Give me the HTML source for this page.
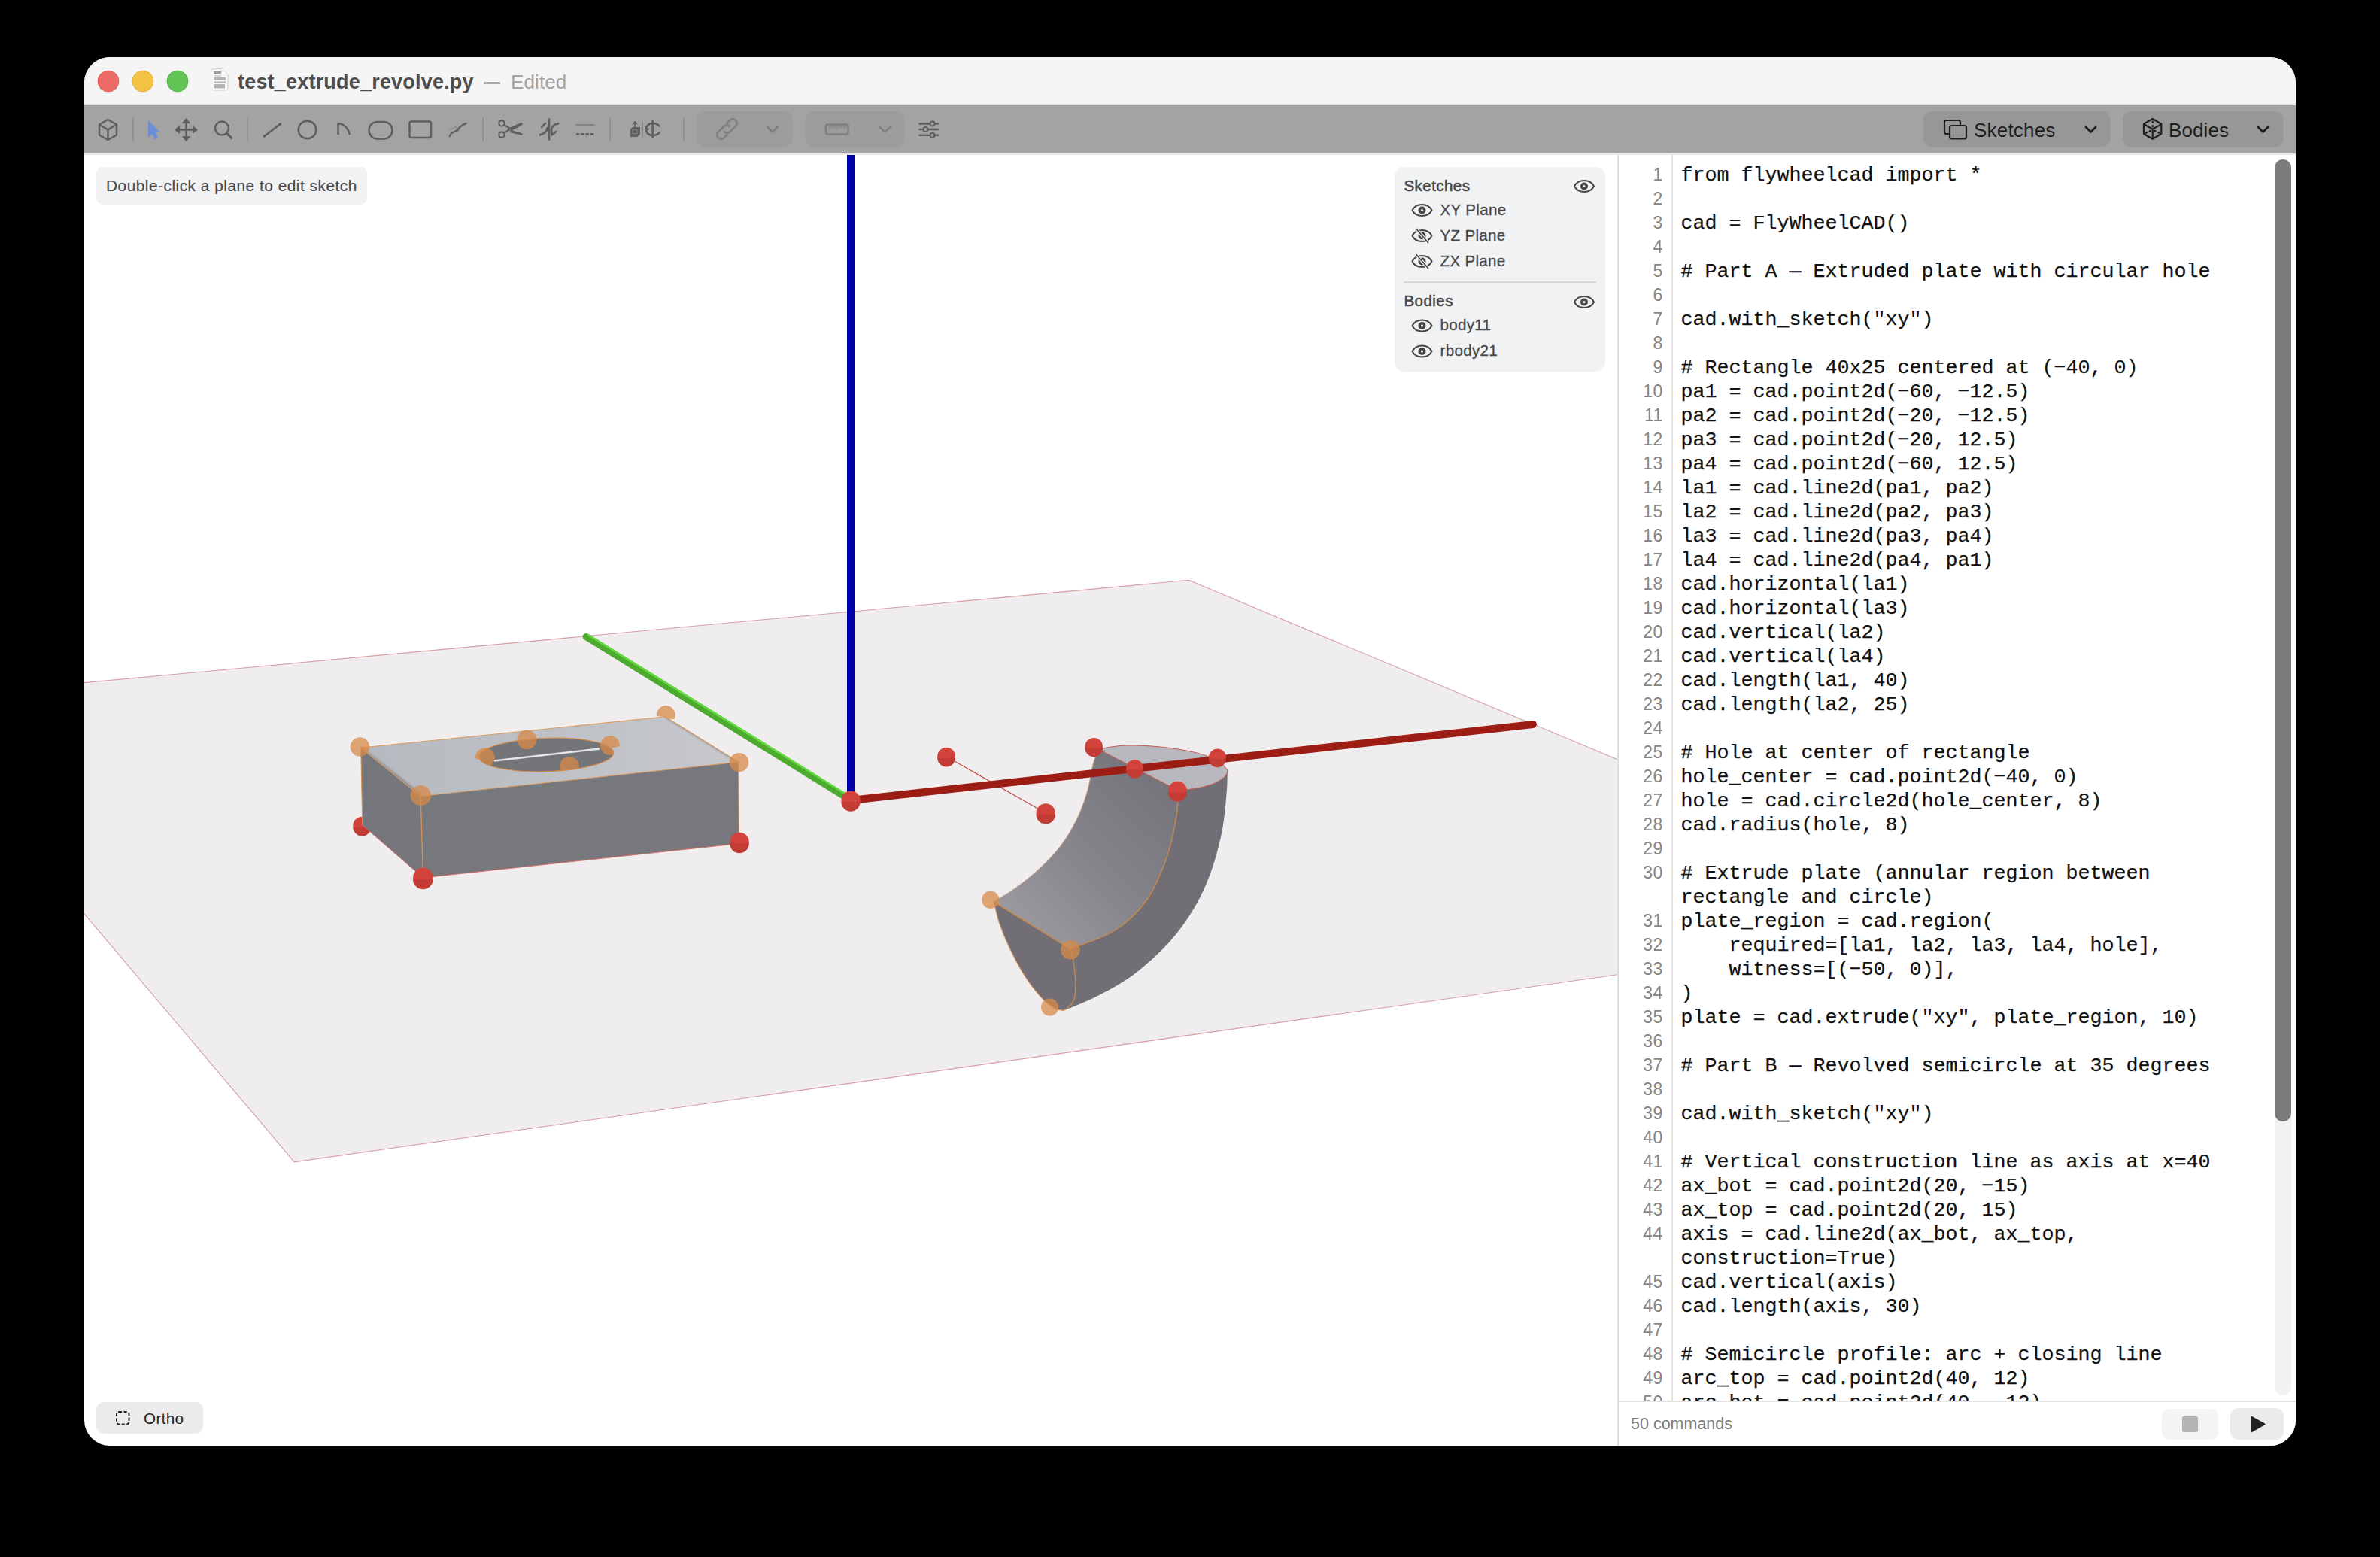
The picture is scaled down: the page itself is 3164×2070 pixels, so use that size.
<!DOCTYPE html><html><head><meta charset="utf-8"><style>
*{margin:0;padding:0;box-sizing:border-box}
html,body{width:3164px;height:2070px;background:#000;overflow:hidden}
.win{position:absolute;left:112px;top:76px;width:2940px;height:1846px;border-radius:34px;overflow:hidden;background:#fff}
.in{position:absolute;left:-112px;top:-76px;width:3164px;height:2070px}
.t{position:absolute;white-space:pre}
.r{position:absolute}
svg{position:absolute;left:0;top:0}
</style></head><body><div class="win"><div class="in"><div class="r" style="left:0;top:0;width:3164px;height:138px;background:#f5f5f5"></div><div class="r" style="left:0;top:138px;width:3164px;height:2px;background:#e6e6e6"></div><div class="r" style="left:0;top:140px;width:3164px;height:64px;background:#a3a3a3"></div><div class="r" style="left:0;top:204px;width:3164px;height:2px;background:#e8e8e8"></div><svg width="3164" height="2070" viewBox="0 0 3164 2070"><defs><linearGradient id="topg" x1="0" y1="0" x2="1" y2="0"><stop offset="0" stop-color="#b6b9bf"/><stop offset="1" stop-color="#c6c8cc"/></linearGradient><linearGradient id="inng" x1="1319" y1="1240" x2="1560" y2="1000" gradientUnits="userSpaceOnUse"><stop offset="0" stop-color="#a09fa5"/><stop offset="0.45" stop-color="#86858b"/><stop offset="1" stop-color="#727077"/></linearGradient><linearGradient id="gax" x1="0" y1="0" x2="0" y2="1"><stop offset="0" stop-color="#62dc3e"/><stop offset="1" stop-color="#48a22c"/></linearGradient><linearGradient id="bev1" x1="520" y1="1026" x2="523.5" y2="1021.5" gradientUnits="userSpaceOnUse"><stop offset="0" stop-color="#8c8f95"/><stop offset="1" stop-color="#b7bac0" stop-opacity="0"/></linearGradient><linearGradient id="bev2" x1="933" y1="983" x2="930.5" y2="987" gradientUnits="userSpaceOnUse"><stop offset="0" stop-color="#979aa0"/><stop offset="1" stop-color="#c2c4c8" stop-opacity="0"/></linearGradient><clipPath id="vp"><rect x="112" y="206" width="2038" height="1716"/></clipPath></defs><g clip-path="url(#vp)"><polygon points="-129,930 1580.4,771.3 2661,1223.4 391.2,1544.8" fill="#efedee" stroke="#d69ea2" stroke-width="1.1"/><circle cx="481.3" cy="1097.8" r="12" fill="#d2443b"/><path d="M469.3,1099.6 A12,12 0 0 0 493.3,1099.6 Z" fill="#c23c35"/><polygon points="479.7,994.2 559.2,1058.5 562.4,1166.9 481.8,1097" fill="#75777c"/><polygon points="559.2,1058.5 981.7,1013.1 982.5,1121.5 562.4,1166.9" fill="#76787d"/><polygon points="479.7,994.2 884.5,952.9 981.7,1013.1 559.2,1058.5" fill="url(#topg)"/><polygon points="479.7,994.2 559.2,1058.5 562.3,1054.6 482.8,990.3" fill="url(#bev1)"/><polygon points="884.5,952.9 981.7,1013.1 979.6,1016.5 882.4,956.3" fill="url(#bev2)"/><ellipse cx="726.4" cy="1003.5" rx="89.4" ry="22.2" transform="rotate(-1.9 726.4 1003.5)" fill="#737579" stroke="#d38b45" stroke-width="1.2"/><line x1="657" y1="1011.5" x2="797" y2="995.5" stroke="#e3e5e8" stroke-width="2.5"/><polyline points="479.7,994.2 884.5,952.9 981.7,1013.1 559.2,1058.5 479.7,994.2" fill="none" stroke="#dc9a5c" stroke-width="1.1"/><line x1="559.2" y1="1058.5" x2="562.4" y2="1166.9" stroke="#d9924c" stroke-width="1.3"/><line x1="479.7" y1="994.2" x2="481.8" y2="1097" stroke="#d9924c" stroke-width="1"/><line x1="981.7" y1="1013.1" x2="982.5" y2="1121.5" stroke="#e0a070" stroke-width="1"/><polyline points="481.8,1097 562.4,1166.9 982.5,1121.5" fill="none" stroke="#d86a60" stroke-width="1"/><circle cx="478.5" cy="993" r="12.8" fill="#d88a48" fill-opacity="0.75"/><circle cx="559.3" cy="1057.5" r="13.6" fill="#d88a48" fill-opacity="0.75"/><circle cx="982.5" cy="1013.6" r="12.7" fill="#d88a48" fill-opacity="0.75"/><clipPath id="trb"><path d="M872,952 L872,930 L900,930 L900,956 L892,956 L884.5,952.9 Z"/></clipPath><g clip-path="url(#trb)"><circle cx="885.3" cy="950.5" r="12.4" fill="#d88a48" fill-opacity="0.75"/></g><clipPath id="hs0"><path d="M687.3,983.2 A13,13 0 0 1 713.3,983.2 A13,3.25 0 0 1 687.3,983.2 Z"/><ellipse cx="726.4" cy="1003.5" rx="89.4" ry="22.2" transform="rotate(-1.9 726.4 1003.5)"/></clipPath><g clip-path="url(#hs0)"><circle cx="700.3" cy="983.2" r="13" fill="#d88a48" fill-opacity="0.75"/></g><clipPath id="hs1"><path d="M631.8,1007.3 A13,13 0 0 1 657.8,1007.3 A13,3.25 0 0 1 631.8,1007.3 Z"/><ellipse cx="726.4" cy="1003.5" rx="89.4" ry="22.2" transform="rotate(-1.9 726.4 1003.5)"/></clipPath><g clip-path="url(#hs1)"><circle cx="644.8" cy="1007.3" r="13" fill="#d88a48" fill-opacity="0.75"/></g><clipPath id="hs2"><path d="M798,991 A13,13 0 0 1 824,991 A13,3.25 0 0 1 798,991 Z"/><ellipse cx="726.4" cy="1003.5" rx="89.4" ry="22.2" transform="rotate(-1.9 726.4 1003.5)"/></clipPath><g clip-path="url(#hs2)"><circle cx="811" cy="991" r="13" fill="#d88a48" fill-opacity="0.75"/></g><clipPath id="hs3"><path d="M743.9,1019 A13,13 0 0 1 769.9,1019 A13,3.25 0 0 1 743.9,1019 Z"/><ellipse cx="726.4" cy="1003.5" rx="89.4" ry="22.2" transform="rotate(-1.9 726.4 1003.5)"/></clipPath><g clip-path="url(#hs3)"><circle cx="756.9" cy="1019" r="13" fill="#d88a48" fill-opacity="0.75"/></g><circle cx="562.4" cy="1166.9" r="13.3" fill="#d2443b"/><path d="M549.1,1168.895 A13.3,13.3 0 0 0 575.6999999999999,1168.895 Z" fill="#c23c35"/><circle cx="983" cy="1119.6" r="12.8" fill="#d2443b"/><path d="M970.2,1121.52 A12.8,12.8 0 0 0 995.8,1121.52 Z" fill="#c23c35"/><path d="M1459.8,995.9 C1466.1,995.1 1483.2,991.4 1497.7,991.0 C1512.2,990.6 1531.0,991.8 1546.5,993.4 C1562.0,995.0 1578.2,997.8 1590.4,1000.8 C1602.6,1003.8 1612.8,1007.9 1619.7,1011.7 C1626.6,1015.6 1629.9,1021.9 1631.9,1023.9 C1631.8,1026.6 1631.7,1035.1 1631.5,1040.0 C1631.3,1044.9 1631.5,1044.9 1630.7,1053.2 C1630.0,1061.5 1628.8,1077.7 1627.0,1089.9 C1625.2,1102.1 1623.0,1113.9 1619.7,1126.5 C1616.5,1139.1 1612.4,1152.9 1607.5,1165.5 C1602.6,1178.1 1597.3,1190.0 1590.4,1202.2 C1583.5,1214.4 1575.0,1227.4 1566.0,1238.8 C1557.0,1250.2 1548.1,1259.9 1536.7,1270.5 C1525.3,1281.1 1511.5,1292.9 1497.7,1302.3 C1483.9,1311.7 1467.6,1319.9 1453.7,1326.7 C1439.8,1333.5 1421.0,1340.5 1414.5,1343.3 C1412.6,1342.9 1407.9,1343.7 1403.0,1341.0 C1398.1,1338.3 1391.8,1334.3 1385.0,1327.0 C1378.2,1319.7 1369.2,1308.2 1362.0,1297.0 C1354.8,1285.8 1347.5,1271.4 1342.0,1260.0 C1336.5,1248.6 1332.5,1238.8 1329.0,1228.6 C1325.5,1218.4 1322.4,1203.7 1321.1,1198.7 C1325.9,1195.7 1340.0,1187.7 1350.0,1180.5 C1360.0,1173.3 1371.0,1164.8 1381.0,1155.5 C1391.0,1146.2 1401.5,1135.8 1410.0,1124.5 C1418.5,1113.2 1426.0,1100.4 1432.0,1088.0 C1438.0,1075.6 1442.6,1061.7 1446.0,1050.0 C1449.4,1038.3 1450.2,1027.0 1452.5,1018.0 C1454.8,1009.0 1458.6,999.6 1459.8,995.9 Z" fill="#716f75"/><path d="M1321.1,1198.7 C1325.9,1195.7 1340.0,1187.7 1350.0,1180.5 C1360.0,1173.3 1371.0,1164.8 1381.0,1155.5 C1391.0,1146.2 1401.5,1135.8 1410.0,1124.5 C1418.5,1113.2 1426.0,1100.4 1432.0,1088.0 C1438.0,1075.6 1442.6,1061.7 1446.0,1050.0 C1449.4,1038.3 1450.2,1027.0 1452.5,1018.0 C1454.8,1009.0 1458.6,999.6 1459.8,995.9 L1566,1050.8 C1565.7,1056.5 1566.5,1070.1 1564.0,1085.0 C1561.5,1099.9 1557.7,1121.3 1551.0,1140.0 C1544.3,1158.7 1535.5,1180.8 1524.0,1197.0 C1512.5,1213.2 1498.8,1226.2 1482.0,1237.0 C1465.2,1247.8 1432.8,1257.4 1423.0,1261.5 Z" fill="url(#inng)"/><path d="M1459.8,995.9 C1466.1,995.1 1483.2,991.4 1497.7,991.0 C1512.2,990.6 1531.0,991.8 1546.5,993.4 C1562.0,995.0 1578.2,997.8 1590.4,1000.8 C1602.6,1003.8 1612.8,1007.9 1619.7,1011.7 C1626.6,1015.6 1629.9,1021.9 1631.9,1023.9 C1631.5,1025.1 1632.0,1028.4 1629.6,1031.1 C1627.2,1033.8 1622.2,1037.5 1617.6,1039.9 C1612.9,1042.3 1607.0,1044.0 1601.7,1045.5 C1596.4,1047.0 1591.7,1047.8 1585.7,1048.7 C1579.8,1049.6 1569.3,1050.5 1566.0,1050.8 Z" fill="#b8b7bd" stroke="#cc5a52" stroke-width="1"/><path d="M1566.0,1050.8 C1565.7,1056.5 1566.5,1070.1 1564.0,1085.0 C1561.5,1099.9 1557.7,1121.3 1551.0,1140.0 C1544.3,1158.7 1535.5,1180.8 1524.0,1197.0 C1512.5,1213.2 1498.8,1226.2 1482.0,1237.0 C1465.2,1247.8 1432.8,1257.4 1423.0,1261.5 " fill="none" stroke="#c98a4c" stroke-width="1.4"/><line x1="1321.1" y1="1198.7" x2="1423" y2="1261.5" stroke="#c98a4c" stroke-width="1.6"/><path d="M1423.0,1261.5 C1423.6,1264.0 1425.6,1269.1 1426.7,1276.2 C1427.8,1283.3 1429.5,1295.5 1429.7,1304.2 C1429.9,1313.0 1429.8,1322.6 1427.9,1328.7 C1426.0,1334.8 1420.8,1338.5 1418.1,1340.9 C1415.4,1343.3 1413.0,1342.9 1412.0,1343.3 " fill="none" stroke="#c98a4c" stroke-width="1.3"/><path d="M1414.5,1343.3 C1412.6,1342.9 1407.9,1343.7 1403.0,1341.0 C1398.1,1338.3 1391.8,1334.3 1385.0,1327.0 C1378.2,1319.7 1369.2,1308.2 1362.0,1297.0 C1354.8,1285.8 1347.5,1271.4 1342.0,1260.0 C1336.5,1248.6 1332.5,1238.8 1329.0,1228.6 C1325.5,1218.4 1322.4,1203.7 1321.1,1198.7 " fill="none" stroke="#d9955a" stroke-width="1.1"/><path d="M1321.1,1198.7 C1325.9,1195.7 1340.0,1187.7 1350.0,1180.5 C1360.0,1173.3 1371.0,1164.8 1381.0,1155.5 C1391.0,1146.2 1401.5,1135.8 1410.0,1124.5 C1418.5,1113.2 1426.0,1100.4 1432.0,1088.0 C1438.0,1075.6 1442.6,1061.7 1446.0,1050.0 C1449.4,1038.3 1450.2,1027.0 1452.5,1018.0 C1454.8,1009.0 1458.6,999.6 1459.8,995.9 " fill="none" stroke="#e0b090" stroke-width="0.9"/><circle cx="1316.8" cy="1196.2" r="11.6" fill="#d88a48" fill-opacity="0.75"/><circle cx="1423" cy="1262.7" r="12.8" fill="#d88a48" fill-opacity="0.75"/><circle cx="1395.6" cy="1339" r="11.6" fill="#d88a48" fill-opacity="0.75"/><line x1="1258.1" y1="1005.8" x2="1390.2" y2="1080.9" stroke="#c4463e" stroke-width="1.2"/><line x1="1131" y1="150" x2="1131" y2="1064" stroke="#0000a8" stroke-width="10"/><line x1="779" y1="846.4" x2="1131" y2="1064" stroke="#4caa2e" stroke-width="9" stroke-linecap="round"/><line x1="781.2" y1="843.6" x2="1125" y2="1056" stroke="#62da3e" stroke-width="2.6"/><line x1="1131" y1="1064" x2="2038" y2="963" stroke="#9c1d14" stroke-width="10" stroke-linecap="round"/><circle cx="1131" cy="1064.2" r="12.6" fill="#d2443b"/><path d="M1118.4,1066.0900000000001 A12.6,12.6 0 0 0 1143.6,1066.0900000000001 Z" fill="#c23c35"/><circle cx="1258.1" cy="1005.8" r="12" fill="#d2443b"/><path d="M1246.1,1007.5999999999999 A12,12 0 0 0 1270.1,1007.5999999999999 Z" fill="#c23c35"/><circle cx="1390.2" cy="1080.9" r="12.7" fill="#d2443b"/><path d="M1377.5,1082.805 A12.7,12.7 0 0 0 1402.9,1082.805 Z" fill="#c23c35"/><circle cx="1454.2" cy="992.7" r="11.8" fill="#d2443b"/><path d="M1442.4,994.47 A11.8,11.8 0 0 0 1466.0,994.47 Z" fill="#c23c35"/><circle cx="1508.6" cy="1021.5" r="11.5" fill="#d2443b"/><path d="M1497.1,1023.225 A11.5,11.5 0 0 0 1520.1,1023.225 Z" fill="#c23c35"/><circle cx="1618.5" cy="1006.9" r="11.5" fill="#d2443b"/><path d="M1607.0,1008.625 A11.5,11.5 0 0 0 1630.0,1008.625 Z" fill="#c23c35"/><circle cx="1565.5" cy="1051.3" r="12.5" fill="#d2443b"/><path d="M1553.0,1053.175 A12.5,12.5 0 0 0 1578.0,1053.175 Z" fill="#c23c35"/></g></svg><svg width="3164" height="206" viewBox="0 0 3164 206"><circle cx="144" cy="108" r="14" fill="#ed6b67" stroke="#d9574f" stroke-width="0.8"/><circle cx="190" cy="108" r="14" fill="#f4c344" stroke="#dca92f" stroke-width="0.8"/><circle cx="236" cy="108" r="14" fill="#61c454" stroke="#4ead41" stroke-width="0.8"/><path d="M283,91.7 L295,91.7 L303,99.7 L303,117.5 Q303,120 300.5,120 L283,120 Q280.5,120 280.5,117.5 L280.5,94.2 Q280.5,91.7 283,91.7 Z" fill="#f7f7f7" stroke="#cfcfcf" stroke-width="1"/><path d="M295,92 L295,99.7 L302.7,99.7 Z" fill="#ffffff" stroke="#dddddd" stroke-width="0.6"/><rect x="284" y="95" width="10" height="3.5" fill="#9c9c9c"/><rect x="284" y="100.5" width="10" height="1" fill="#b4b4b4"/><rect x="284" y="103" width="16" height="3.5" fill="#b4b4b4"/><rect x="284" y="108.5" width="16" height="2" fill="#b4b4b4"/><rect x="284" y="112" width="15" height="5.5" fill="#b4b4b4"/></svg><div class="t" style="left:316px;top:95.54px;font-size:27px;line-height:27px;color:#4d4d4d;font-weight:bold;letter-spacing:0.2px;font-family:'Liberation Sans',sans-serif;">test_extrude_revolve.py</div><div class="r" style="left:643px;top:109px;width:22px;height:3px;background:#ababab"></div><div class="t" style="left:679px;top:96.39px;font-size:26px;line-height:26px;color:#a3a3a3;font-weight:normal;letter-spacing:0.1px;font-family:'Liberation Sans',sans-serif;">Edited</div><svg width="3164" height="206" viewBox="0 0 3164 206" fill="none" stroke-linecap="round" stroke-linejoin="round"><rect x="926" y="148" width="128" height="47.5" rx="11" fill="#9c9c9c" stroke="none"/><rect x="1071" y="148" width="131.5" height="47.5" rx="11" fill="#9c9c9c" stroke="none"/><rect x="2557" y="148" width="248.5" height="47.5" rx="11" fill="#979797" stroke="none"/><rect x="2822" y="148" width="213.5" height="47.5" rx="11" fill="#979797" stroke="none"/><line x1="177" y1="156.5" x2="177" y2="187.5" stroke="#8d8d8d" stroke-width="1.6" stroke-linecap="butt"/><line x1="329" y1="156.5" x2="329" y2="187.5" stroke="#8d8d8d" stroke-width="1.6" stroke-linecap="butt"/><line x1="642" y1="156.5" x2="642" y2="187.5" stroke="#8d8d8d" stroke-width="1.6" stroke-linecap="butt"/><line x1="811" y1="156.5" x2="811" y2="187.5" stroke="#8d8d8d" stroke-width="1.6" stroke-linecap="butt"/><line x1="909" y1="156.5" x2="909" y2="187.5" stroke="#8d8d8d" stroke-width="1.6" stroke-linecap="butt"/><path d="M143.5,159 L155,165.5 L155,179.5 L143.5,186 L132,179.5 L132,165.5 Z M132,165.5 L143.5,172.5 L155,165.5 M143.5,172.5 L143.5,186" stroke="#5e5e5e" stroke-width="2.5"/><path d="M197.5,161 L197.5,182 L202.3,177.2 L206.3,185 L209.6,183.4 L205.8,175.8 L211.5,175.4 Z" fill="#6b8fdb" stroke="#6b8fdb" stroke-width="1.2"/><path d="M247.5,161 L247.5,184 M236,172.5 L259,172.5" stroke="#5e5e5e" stroke-width="2.5"/><path d="M247.5,158 L243,163.5 L252,163.5 Z M247.5,187 L243,181.5 L252,181.5 Z M233,172.5 L238.5,168 L238.5,177 Z M262,172.5 L256.5,168 L256.5,177 Z" fill="#5e5e5e" stroke="#5e5e5e" stroke-width="1.2"/><circle cx="295" cy="170.5" r="9" stroke="#5e5e5e" stroke-width="2.5"/><line x1="301.5" y1="177" x2="307.5" y2="183.5" stroke="#5e5e5e" stroke-width="3.2"/><line x1="351.5" y1="181" x2="372.5" y2="165" stroke="#5e5e5e" stroke-width="2.5"/><circle cx="351.5" cy="181" r="1.8" fill="#5e5e5e" stroke="none"/><circle cx="372.5" cy="165" r="1.8" fill="#5e5e5e" stroke="none"/><circle cx="408.5" cy="172.5" r="11.8" stroke="#5e5e5e" stroke-width="2.5"/><path d="M449.5,178 L449.5,164.5 C456,164 463,170 464.5,178" stroke="#5e5e5e" stroke-width="2.5"/><rect x="490.5" y="162" width="31" height="22.5" rx="11" stroke="#5e5e5e" stroke-width="2.5"/><rect x="544.5" y="161.5" width="28.5" height="21.5" rx="2.5" stroke="#5e5e5e" stroke-width="2.5"/><path d="M598,181 C600,173 606,177 609,172 C612,167 615,166 619.5,164" stroke="#5e5e5e" stroke-width="2.5"/><path d="M598,173 L606,168 L611,175" stroke="#7a7a7a" stroke-width="1" stroke-dasharray="1.5 1.5"/><circle cx="667" cy="163.8" r="3.7" stroke="#5e5e5e" stroke-width="2.1"/><circle cx="667" cy="179.1" r="3.7" stroke="#5e5e5e" stroke-width="2.1"/><path d="M670,166 L677,170 M670.2,176.8 L677.5,172" stroke="#5e5e5e" stroke-width="2.2"/><path d="M675.5,171.2 L693,163.2 Q695,163.8 694.2,165.6 L679.2,174.2 Z" fill="#5e5e5e" stroke="#5e5e5e" stroke-width="0.8"/><path d="M680,173.6 L693.8,177.6 Q695,179.2 693.6,179.6 L678.8,176 Z" fill="#5e5e5e" stroke="#5e5e5e" stroke-width="0.8"/><circle cx="678.3" cy="171.6" r="0.9" fill="#a3a3a3"/><path d="M730,158.5 L730,185.5" stroke="#5e5e5e" stroke-width="2.6"/><path d="M718,179.3 C722.5,178 727,175 727.6,170 M720.3,169 L725,163.8" stroke="#5e5e5e" stroke-width="2.6"/><path d="M742.3,164.3 C738.5,165 733.5,167 733,172.5 L733.6,179.6 L739.6,174.8" stroke="#5e5e5e" stroke-width="2.6"/><line x1="766" y1="166" x2="790" y2="166" stroke="#838383" stroke-width="1.8"/><line x1="766" y1="178.2" x2="790.5" y2="178.2" stroke="#5e5e5e" stroke-width="2.4" stroke-dasharray="4.3 2" stroke-linecap="butt"/><path d="M838.5,172 L841.5,169.3 L850.5,169.3 L850.5,178.5 L847.5,181.5 L838.5,181.5 Z" fill="#5e5e5e" stroke="#5e5e5e" stroke-width="1"/><rect x="841.3" y="172.3" width="5.5" height="5.5" fill="none" stroke="#8a8a8a" stroke-width="1"/><path d="M844.2,169 L844.2,162.5" stroke="#5e5e5e" stroke-width="1.8"/><path d="M841.6,164.5 L844.2,161.3 L846.8,164.5 Z" fill="#5e5e5e" stroke="#5e5e5e" stroke-width="1"/><line x1="854.1" y1="161.5" x2="854.1" y2="182.6" stroke="#7d7d7d" stroke-width="1.2"/><path d="M867.6,161 L867.6,183" stroke="#5e5e5e" stroke-width="2.6"/><path d="M876.5,167.5 C874,164.6 871,164 867.8,164 C862,164 858.8,168 858.8,172 C858.8,176 862,180 867.8,180 C871,180 874,179.3 876.5,176.5" stroke="#5e5e5e" stroke-width="2.6"/><path d="M858.2,168.5 L859,174 L862.8,171.2" fill="#5e5e5e" stroke="#5e5e5e" stroke-width="1.5"/><g transform="rotate(45 966.5 171.5)"><path d="M961,166 L961,160.5 A5.5,5.5 0 0 1 972,160.5 L972,171 A5.5,5.5 0 0 1 966.5,176.5" stroke="#7f7f7f" stroke-width="2.6"/><path d="M972,177 L972,182.5 A5.5,5.5 0 0 1 961,182.5 L961,172 A5.5,5.5 0 0 1 966.5,166.5" stroke="#7f7f7f" stroke-width="2.6"/></g><path d="M1020.5,169 L1027,175.5 L1033.5,169" stroke="#7f7f7f" stroke-width="2.8"/><rect x="1098" y="165.5" width="29.5" height="13" rx="2.5" stroke="#7f7f7f" stroke-width="2.6"/><line x1="1102.8" y1="167.5" x2="1102.8" y2="170.5" stroke="#7f7f7f" stroke-width="0.9"/><line x1="1105.2" y1="167.5" x2="1105.2" y2="170.5" stroke="#7f7f7f" stroke-width="0.9"/><line x1="1107.5" y1="167.5" x2="1107.5" y2="170.5" stroke="#7f7f7f" stroke-width="0.9"/><line x1="1109.9" y1="167.5" x2="1109.9" y2="170.5" stroke="#7f7f7f" stroke-width="0.9"/><line x1="1112.2" y1="167.5" x2="1112.2" y2="172.5" stroke="#7f7f7f" stroke-width="0.9"/><line x1="1114.6" y1="167.5" x2="1114.6" y2="170.5" stroke="#7f7f7f" stroke-width="0.9"/><line x1="1117.0" y1="167.5" x2="1117.0" y2="170.5" stroke="#7f7f7f" stroke-width="0.9"/><line x1="1119.3" y1="167.5" x2="1119.3" y2="170.5" stroke="#7f7f7f" stroke-width="0.9"/><line x1="1121.7" y1="167.5" x2="1121.7" y2="170.5" stroke="#7f7f7f" stroke-width="0.9"/><line x1="1124.0" y1="167.5" x2="1124.0" y2="170.5" stroke="#7f7f7f" stroke-width="0.9"/><path d="M1169.5,169 L1176.5,175.5 L1183.5,169" stroke="#7f7f7f" stroke-width="2.8"/><path d="M1222.5,164.5 L1247,164.5 M1222.5,172 L1247,172 M1222.5,179.8 L1247,179.8" stroke="#5e5e5e" stroke-width="2.4"/><circle cx="1239.5" cy="164.5" r="3" fill="#a3a3a3" stroke="#5e5e5e" stroke-width="2"/><circle cx="1230.5" cy="172" r="3" fill="#a3a3a3" stroke="#5e5e5e" stroke-width="2"/><circle cx="1239.5" cy="179.8" r="3" fill="#a3a3a3" stroke="#5e5e5e" stroke-width="2"/><rect x="2585" y="160" width="21" height="18" rx="2.5" stroke="#1e1e1e" stroke-width="2.2"/><rect x="2592" y="167" width="22" height="17.5" rx="2.5" fill="#979797" stroke="#1e1e1e" stroke-width="2.2"/><path d="M2773,169 L2779.5,175.5 L2786,169" stroke="#1e1e1e" stroke-width="2.8"/><path d="M2861.7,158 L2873.3,164.8 L2873.3,178 L2861.7,184.8 L2850,178 L2850,164.8 Z" stroke="#1e1e1e" stroke-width="2.2"/><path d="M2850.5,165.5 L2861.7,171.7 L2872.8,165.5 M2861.7,171.7 L2861.7,184.5" stroke="#1e1e1e" stroke-width="2.1"/><path d="M2861.7,160.5 L2861.7,163.8 M2861.7,166.3 L2861.7,169.6 M2859.5,173.3 L2856.8,174.8 M2854.8,175.9 L2852.1,177.4 M2863.9,173.3 L2866.6,174.8 M2868.6,175.9 L2871.3,177.4" stroke="#1e1e1e" stroke-width="2.1" stroke-linecap="butt"/><path d="M3002,169 L3008.5,175.5 L3015,169" stroke="#1e1e1e" stroke-width="2.8"/></svg><div class="t" style="left:2624px;top:159.99px;font-size:26px;line-height:26px;color:#1e1e1e;font-weight:normal;letter-spacing:0.2px;font-family:'Liberation Sans',sans-serif;">Sketches</div><div class="t" style="left:2883px;top:159.99px;font-size:26px;line-height:26px;color:#1e1e1e;font-weight:normal;letter-spacing:0.1px;font-family:'Liberation Sans',sans-serif;">Bodies</div><div class="r" style="left:128px;top:222px;width:360px;height:50px;border-radius:9px;background:#f1f2f4"></div><div class="t" style="left:141px;top:237.09px;font-size:20.8px;line-height:20.8px;color:#474747;font-weight:normal;letter-spacing:0.52px;font-family:'Liberation Sans',sans-serif;-webkit-text-stroke:0.2px #474747">Double-click a plane to edit sketch</div><div class="r" style="left:1854px;top:222px;width:280px;height:272px;border-radius:13px;background:#f1f2f4"></div><div class="r" style="left:1866px;top:374px;width:256px;height:2px;background:#d6d6d8"></div><div class="t" style="left:1866.5px;top:236.65px;font-size:20.5px;line-height:20.5px;color:#474747;font-weight:500;letter-spacing:0.45px;font-family:'Liberation Sans',sans-serif;-webkit-text-stroke:0.6px #474747">Sketches</div><div class="t" style="left:1866.5px;top:389.65px;font-size:20.5px;line-height:20.5px;color:#474747;font-weight:500;letter-spacing:0.45px;font-family:'Liberation Sans',sans-serif;-webkit-text-stroke:0.6px #474747">Bodies</div><div class="t" style="left:1914.5px;top:268.56px;font-size:20.6px;line-height:20.6px;color:#474747;font-weight:normal;letter-spacing:0.3px;font-family:'Liberation Sans',sans-serif;-webkit-text-stroke:0.3px #474747">XY Plane</div><div class="t" style="left:1914.5px;top:302.56px;font-size:20.6px;line-height:20.6px;color:#474747;font-weight:normal;letter-spacing:0.3px;font-family:'Liberation Sans',sans-serif;-webkit-text-stroke:0.3px #474747">YZ Plane</div><div class="t" style="left:1914.5px;top:336.56px;font-size:20.6px;line-height:20.6px;color:#474747;font-weight:normal;letter-spacing:0.3px;font-family:'Liberation Sans',sans-serif;-webkit-text-stroke:0.3px #474747">ZX Plane</div><div class="t" style="left:1914.5px;top:422.06px;font-size:20.6px;line-height:20.6px;color:#474747;font-weight:normal;letter-spacing:0.3px;font-family:'Liberation Sans',sans-serif;-webkit-text-stroke:0.3px #474747">body11</div><div class="t" style="left:1914.5px;top:456.06px;font-size:20.6px;line-height:20.6px;color:#474747;font-weight:normal;letter-spacing:0.3px;font-family:'Liberation Sans',sans-serif;-webkit-text-stroke:0.3px #474747">rbody21</div><div class="r" style="left:128px;top:1864px;width:142px;height:42px;border-radius:10px;background:#ebebeb"></div><svg width="3164" height="2070" viewBox="0 0 3164 2070" fill="none"><path d="M2093,247.5 C2098,237.5 2114,237.5 2119,247.5 C2114,257.5 2098,257.5 2093,247.5 Z" stroke="#474747" stroke-width="2"/><circle cx="2106" cy="247.5" r="5" fill="#474747"/><circle cx="2106" cy="247.5" r="1.6" fill="#f1f2f4"/><path d="M2093,401.5 C2098,391.5 2114,391.5 2119,401.5 C2114,411.5 2098,411.5 2093,401.5 Z" stroke="#474747" stroke-width="2"/><circle cx="2106" cy="401.5" r="5" fill="#474747"/><circle cx="2106" cy="401.5" r="1.6" fill="#f1f2f4"/><path d="M1877.5,279.5 C1882.5,269.5 1898.5,269.5 1903.5,279.5 C1898.5,289.5 1882.5,289.5 1877.5,279.5 Z" stroke="#474747" stroke-width="2"/><circle cx="1890.5" cy="279.5" r="5" fill="#474747"/><circle cx="1890.5" cy="279.5" r="1.6" fill="#f1f2f4"/><path d="M1877.5,313.5 C1882.5,303.5 1898.5,303.5 1903.5,313.5 C1898.5,323.5 1882.5,323.5 1877.5,313.5 Z" stroke="#474747" stroke-width="2"/><circle cx="1890.5" cy="313.5" r="5" fill="#474747"/><circle cx="1890.5" cy="313.5" r="1.6" fill="#f1f2f4"/><line x1="1882.5" y1="304.0" x2="1899.0" y2="323.0" stroke="#f1f2f4" stroke-width="4"/><line x1="1882.5" y1="304.0" x2="1899.0" y2="323.0" stroke="#474747" stroke-width="1.8"/><path d="M1877.5,347.5 C1882.5,337.5 1898.5,337.5 1903.5,347.5 C1898.5,357.5 1882.5,357.5 1877.5,347.5 Z" stroke="#474747" stroke-width="2"/><circle cx="1890.5" cy="347.5" r="5" fill="#474747"/><circle cx="1890.5" cy="347.5" r="1.6" fill="#f1f2f4"/><line x1="1882.5" y1="338.0" x2="1899.0" y2="357.0" stroke="#f1f2f4" stroke-width="4"/><line x1="1882.5" y1="338.0" x2="1899.0" y2="357.0" stroke="#474747" stroke-width="1.8"/><path d="M1877.5,433 C1882.5,423 1898.5,423 1903.5,433 C1898.5,443 1882.5,443 1877.5,433 Z" stroke="#474747" stroke-width="2"/><circle cx="1890.5" cy="433" r="5" fill="#474747"/><circle cx="1890.5" cy="433" r="1.6" fill="#f1f2f4"/><path d="M1877.5,467 C1882.5,457 1898.5,457 1903.5,467 C1898.5,477 1882.5,477 1877.5,467 Z" stroke="#474747" stroke-width="2"/><circle cx="1890.5" cy="467" r="5" fill="#474747"/><circle cx="1890.5" cy="467" r="1.6" fill="#f1f2f4"/><rect x="155" y="1877" width="16.5" height="16.5" rx="3" stroke="#222" stroke-width="2" stroke-dasharray="4 2.6"/></svg><div class="t" style="left:191px;top:1876.08px;font-size:20.7px;line-height:20.7px;color:#1f1f1f;font-weight:normal;letter-spacing:0.3px;font-family:'Liberation Sans',sans-serif;">Ortho</div><div class="r" style="left:2150px;top:206px;width:902px;height:1716px;background:#fff"></div><div class="r" style="left:2149.5px;top:206px;width:2.5px;height:1716px;background:#dcdcdc"></div><div class="r" style="left:2222px;top:206px;width:2px;height:1657px;background:#e2e2e2"></div><div class="r" style="left:2150px;top:206px;width:902px;height:1657px;overflow:hidden"><div class="r" style="left:-2150px;top:-206px;width:3164px;height:2070px"><div class="t" style="left:2110px;width:100.5px;text-align:right;top:215.8px;font:23px/32px 'Liberation Sans',sans-serif;color:#868686;letter-spacing:0.3px">1</div><div class="t" style="left:2234.6px;top:216.9px;font:26.67px/32px 'Liberation Mono',monospace;color:#111;-webkit-text-stroke:0.25px #111">from flywheelcad import *</div><div class="t" style="left:2110px;width:100.5px;text-align:right;top:247.8px;font:23px/32px 'Liberation Sans',sans-serif;color:#868686;letter-spacing:0.3px">2</div><div class="t" style="left:2110px;width:100.5px;text-align:right;top:279.8px;font:23px/32px 'Liberation Sans',sans-serif;color:#868686;letter-spacing:0.3px">3</div><div class="t" style="left:2234.6px;top:280.9px;font:26.67px/32px 'Liberation Mono',monospace;color:#111;-webkit-text-stroke:0.25px #111">cad = FlyWheelCAD()</div><div class="t" style="left:2110px;width:100.5px;text-align:right;top:311.8px;font:23px/32px 'Liberation Sans',sans-serif;color:#868686;letter-spacing:0.3px">4</div><div class="t" style="left:2110px;width:100.5px;text-align:right;top:343.8px;font:23px/32px 'Liberation Sans',sans-serif;color:#868686;letter-spacing:0.3px">5</div><div class="t" style="left:2234.6px;top:344.9px;font:26.67px/32px 'Liberation Mono',monospace;color:#111;-webkit-text-stroke:0.25px #111"># Part A — Extruded plate with circular hole</div><div class="t" style="left:2110px;width:100.5px;text-align:right;top:375.8px;font:23px/32px 'Liberation Sans',sans-serif;color:#868686;letter-spacing:0.3px">6</div><div class="t" style="left:2110px;width:100.5px;text-align:right;top:407.8px;font:23px/32px 'Liberation Sans',sans-serif;color:#868686;letter-spacing:0.3px">7</div><div class="t" style="left:2234.6px;top:408.9px;font:26.67px/32px 'Liberation Mono',monospace;color:#111;-webkit-text-stroke:0.25px #111">cad.with_sketch(&quot;xy&quot;)</div><div class="t" style="left:2110px;width:100.5px;text-align:right;top:439.8px;font:23px/32px 'Liberation Sans',sans-serif;color:#868686;letter-spacing:0.3px">8</div><div class="t" style="left:2110px;width:100.5px;text-align:right;top:471.8px;font:23px/32px 'Liberation Sans',sans-serif;color:#868686;letter-spacing:0.3px">9</div><div class="t" style="left:2234.6px;top:472.9px;font:26.67px/32px 'Liberation Mono',monospace;color:#111;-webkit-text-stroke:0.25px #111"># Rectangle 40x25 centered at (−40, 0)</div><div class="t" style="left:2110px;width:100.5px;text-align:right;top:503.8px;font:23px/32px 'Liberation Sans',sans-serif;color:#868686;letter-spacing:0.3px">10</div><div class="t" style="left:2234.6px;top:504.9px;font:26.67px/32px 'Liberation Mono',monospace;color:#111;-webkit-text-stroke:0.25px #111">pa1 = cad.point2d(−60, −12.5)</div><div class="t" style="left:2110px;width:100.5px;text-align:right;top:535.8px;font:23px/32px 'Liberation Sans',sans-serif;color:#868686;letter-spacing:0.3px">11</div><div class="t" style="left:2234.6px;top:536.9px;font:26.67px/32px 'Liberation Mono',monospace;color:#111;-webkit-text-stroke:0.25px #111">pa2 = cad.point2d(−20, −12.5)</div><div class="t" style="left:2110px;width:100.5px;text-align:right;top:567.8px;font:23px/32px 'Liberation Sans',sans-serif;color:#868686;letter-spacing:0.3px">12</div><div class="t" style="left:2234.6px;top:568.9px;font:26.67px/32px 'Liberation Mono',monospace;color:#111;-webkit-text-stroke:0.25px #111">pa3 = cad.point2d(−20, 12.5)</div><div class="t" style="left:2110px;width:100.5px;text-align:right;top:599.8px;font:23px/32px 'Liberation Sans',sans-serif;color:#868686;letter-spacing:0.3px">13</div><div class="t" style="left:2234.6px;top:600.9px;font:26.67px/32px 'Liberation Mono',monospace;color:#111;-webkit-text-stroke:0.25px #111">pa4 = cad.point2d(−60, 12.5)</div><div class="t" style="left:2110px;width:100.5px;text-align:right;top:631.8px;font:23px/32px 'Liberation Sans',sans-serif;color:#868686;letter-spacing:0.3px">14</div><div class="t" style="left:2234.6px;top:632.9px;font:26.67px/32px 'Liberation Mono',monospace;color:#111;-webkit-text-stroke:0.25px #111">la1 = cad.line2d(pa1, pa2)</div><div class="t" style="left:2110px;width:100.5px;text-align:right;top:663.8px;font:23px/32px 'Liberation Sans',sans-serif;color:#868686;letter-spacing:0.3px">15</div><div class="t" style="left:2234.6px;top:664.9px;font:26.67px/32px 'Liberation Mono',monospace;color:#111;-webkit-text-stroke:0.25px #111">la2 = cad.line2d(pa2, pa3)</div><div class="t" style="left:2110px;width:100.5px;text-align:right;top:695.8px;font:23px/32px 'Liberation Sans',sans-serif;color:#868686;letter-spacing:0.3px">16</div><div class="t" style="left:2234.6px;top:696.9px;font:26.67px/32px 'Liberation Mono',monospace;color:#111;-webkit-text-stroke:0.25px #111">la3 = cad.line2d(pa3, pa4)</div><div class="t" style="left:2110px;width:100.5px;text-align:right;top:727.8px;font:23px/32px 'Liberation Sans',sans-serif;color:#868686;letter-spacing:0.3px">17</div><div class="t" style="left:2234.6px;top:728.9px;font:26.67px/32px 'Liberation Mono',monospace;color:#111;-webkit-text-stroke:0.25px #111">la4 = cad.line2d(pa4, pa1)</div><div class="t" style="left:2110px;width:100.5px;text-align:right;top:759.8px;font:23px/32px 'Liberation Sans',sans-serif;color:#868686;letter-spacing:0.3px">18</div><div class="t" style="left:2234.6px;top:760.9px;font:26.67px/32px 'Liberation Mono',monospace;color:#111;-webkit-text-stroke:0.25px #111">cad.horizontal(la1)</div><div class="t" style="left:2110px;width:100.5px;text-align:right;top:791.8px;font:23px/32px 'Liberation Sans',sans-serif;color:#868686;letter-spacing:0.3px">19</div><div class="t" style="left:2234.6px;top:792.9px;font:26.67px/32px 'Liberation Mono',monospace;color:#111;-webkit-text-stroke:0.25px #111">cad.horizontal(la3)</div><div class="t" style="left:2110px;width:100.5px;text-align:right;top:823.8px;font:23px/32px 'Liberation Sans',sans-serif;color:#868686;letter-spacing:0.3px">20</div><div class="t" style="left:2234.6px;top:824.9px;font:26.67px/32px 'Liberation Mono',monospace;color:#111;-webkit-text-stroke:0.25px #111">cad.vertical(la2)</div><div class="t" style="left:2110px;width:100.5px;text-align:right;top:855.8px;font:23px/32px 'Liberation Sans',sans-serif;color:#868686;letter-spacing:0.3px">21</div><div class="t" style="left:2234.6px;top:856.9px;font:26.67px/32px 'Liberation Mono',monospace;color:#111;-webkit-text-stroke:0.25px #111">cad.vertical(la4)</div><div class="t" style="left:2110px;width:100.5px;text-align:right;top:887.8px;font:23px/32px 'Liberation Sans',sans-serif;color:#868686;letter-spacing:0.3px">22</div><div class="t" style="left:2234.6px;top:888.9px;font:26.67px/32px 'Liberation Mono',monospace;color:#111;-webkit-text-stroke:0.25px #111">cad.length(la1, 40)</div><div class="t" style="left:2110px;width:100.5px;text-align:right;top:919.8px;font:23px/32px 'Liberation Sans',sans-serif;color:#868686;letter-spacing:0.3px">23</div><div class="t" style="left:2234.6px;top:920.9px;font:26.67px/32px 'Liberation Mono',monospace;color:#111;-webkit-text-stroke:0.25px #111">cad.length(la2, 25)</div><div class="t" style="left:2110px;width:100.5px;text-align:right;top:951.8px;font:23px/32px 'Liberation Sans',sans-serif;color:#868686;letter-spacing:0.3px">24</div><div class="t" style="left:2110px;width:100.5px;text-align:right;top:983.8px;font:23px/32px 'Liberation Sans',sans-serif;color:#868686;letter-spacing:0.3px">25</div><div class="t" style="left:2234.6px;top:984.9px;font:26.67px/32px 'Liberation Mono',monospace;color:#111;-webkit-text-stroke:0.25px #111"># Hole at center of rectangle</div><div class="t" style="left:2110px;width:100.5px;text-align:right;top:1015.8px;font:23px/32px 'Liberation Sans',sans-serif;color:#868686;letter-spacing:0.3px">26</div><div class="t" style="left:2234.6px;top:1016.9px;font:26.67px/32px 'Liberation Mono',monospace;color:#111;-webkit-text-stroke:0.25px #111">hole_center = cad.point2d(−40, 0)</div><div class="t" style="left:2110px;width:100.5px;text-align:right;top:1047.8px;font:23px/32px 'Liberation Sans',sans-serif;color:#868686;letter-spacing:0.3px">27</div><div class="t" style="left:2234.6px;top:1048.9px;font:26.67px/32px 'Liberation Mono',monospace;color:#111;-webkit-text-stroke:0.25px #111">hole = cad.circle2d(hole_center, 8)</div><div class="t" style="left:2110px;width:100.5px;text-align:right;top:1079.8px;font:23px/32px 'Liberation Sans',sans-serif;color:#868686;letter-spacing:0.3px">28</div><div class="t" style="left:2234.6px;top:1080.9px;font:26.67px/32px 'Liberation Mono',monospace;color:#111;-webkit-text-stroke:0.25px #111">cad.radius(hole, 8)</div><div class="t" style="left:2110px;width:100.5px;text-align:right;top:1111.8px;font:23px/32px 'Liberation Sans',sans-serif;color:#868686;letter-spacing:0.3px">29</div><div class="t" style="left:2110px;width:100.5px;text-align:right;top:1143.8px;font:23px/32px 'Liberation Sans',sans-serif;color:#868686;letter-spacing:0.3px">30</div><div class="t" style="left:2234.6px;top:1144.9px;font:26.67px/32px 'Liberation Mono',monospace;color:#111;-webkit-text-stroke:0.25px #111"># Extrude plate (annular region between</div><div class="t" style="left:2234.6px;top:1176.9px;font:26.67px/32px 'Liberation Mono',monospace;color:#111;-webkit-text-stroke:0.25px #111">rectangle and circle)</div><div class="t" style="left:2110px;width:100.5px;text-align:right;top:1207.8px;font:23px/32px 'Liberation Sans',sans-serif;color:#868686;letter-spacing:0.3px">31</div><div class="t" style="left:2234.6px;top:1208.9px;font:26.67px/32px 'Liberation Mono',monospace;color:#111;-webkit-text-stroke:0.25px #111">plate_region = cad.region(</div><div class="t" style="left:2110px;width:100.5px;text-align:right;top:1239.8px;font:23px/32px 'Liberation Sans',sans-serif;color:#868686;letter-spacing:0.3px">32</div><div class="t" style="left:2234.6px;top:1240.9px;font:26.67px/32px 'Liberation Mono',monospace;color:#111;-webkit-text-stroke:0.25px #111">    required=[la1, la2, la3, la4, hole],</div><div class="t" style="left:2110px;width:100.5px;text-align:right;top:1271.8px;font:23px/32px 'Liberation Sans',sans-serif;color:#868686;letter-spacing:0.3px">33</div><div class="t" style="left:2234.6px;top:1272.9px;font:26.67px/32px 'Liberation Mono',monospace;color:#111;-webkit-text-stroke:0.25px #111">    witness=[(−50, 0)],</div><div class="t" style="left:2110px;width:100.5px;text-align:right;top:1303.8px;font:23px/32px 'Liberation Sans',sans-serif;color:#868686;letter-spacing:0.3px">34</div><div class="t" style="left:2234.6px;top:1304.9px;font:26.67px/32px 'Liberation Mono',monospace;color:#111;-webkit-text-stroke:0.25px #111">)</div><div class="t" style="left:2110px;width:100.5px;text-align:right;top:1335.8px;font:23px/32px 'Liberation Sans',sans-serif;color:#868686;letter-spacing:0.3px">35</div><div class="t" style="left:2234.6px;top:1336.9px;font:26.67px/32px 'Liberation Mono',monospace;color:#111;-webkit-text-stroke:0.25px #111">plate = cad.extrude(&quot;xy&quot;, plate_region, 10)</div><div class="t" style="left:2110px;width:100.5px;text-align:right;top:1367.8px;font:23px/32px 'Liberation Sans',sans-serif;color:#868686;letter-spacing:0.3px">36</div><div class="t" style="left:2110px;width:100.5px;text-align:right;top:1399.8px;font:23px/32px 'Liberation Sans',sans-serif;color:#868686;letter-spacing:0.3px">37</div><div class="t" style="left:2234.6px;top:1400.9px;font:26.67px/32px 'Liberation Mono',monospace;color:#111;-webkit-text-stroke:0.25px #111"># Part B — Revolved semicircle at 35 degrees</div><div class="t" style="left:2110px;width:100.5px;text-align:right;top:1431.8px;font:23px/32px 'Liberation Sans',sans-serif;color:#868686;letter-spacing:0.3px">38</div><div class="t" style="left:2110px;width:100.5px;text-align:right;top:1463.8px;font:23px/32px 'Liberation Sans',sans-serif;color:#868686;letter-spacing:0.3px">39</div><div class="t" style="left:2234.6px;top:1464.9px;font:26.67px/32px 'Liberation Mono',monospace;color:#111;-webkit-text-stroke:0.25px #111">cad.with_sketch(&quot;xy&quot;)</div><div class="t" style="left:2110px;width:100.5px;text-align:right;top:1495.8px;font:23px/32px 'Liberation Sans',sans-serif;color:#868686;letter-spacing:0.3px">40</div><div class="t" style="left:2110px;width:100.5px;text-align:right;top:1527.8px;font:23px/32px 'Liberation Sans',sans-serif;color:#868686;letter-spacing:0.3px">41</div><div class="t" style="left:2234.6px;top:1528.9px;font:26.67px/32px 'Liberation Mono',monospace;color:#111;-webkit-text-stroke:0.25px #111"># Vertical construction line as axis at x=40</div><div class="t" style="left:2110px;width:100.5px;text-align:right;top:1559.8px;font:23px/32px 'Liberation Sans',sans-serif;color:#868686;letter-spacing:0.3px">42</div><div class="t" style="left:2234.6px;top:1560.9px;font:26.67px/32px 'Liberation Mono',monospace;color:#111;-webkit-text-stroke:0.25px #111">ax_bot = cad.point2d(20, −15)</div><div class="t" style="left:2110px;width:100.5px;text-align:right;top:1591.8px;font:23px/32px 'Liberation Sans',sans-serif;color:#868686;letter-spacing:0.3px">43</div><div class="t" style="left:2234.6px;top:1592.9px;font:26.67px/32px 'Liberation Mono',monospace;color:#111;-webkit-text-stroke:0.25px #111">ax_top = cad.point2d(20, 15)</div><div class="t" style="left:2110px;width:100.5px;text-align:right;top:1623.8px;font:23px/32px 'Liberation Sans',sans-serif;color:#868686;letter-spacing:0.3px">44</div><div class="t" style="left:2234.6px;top:1624.9px;font:26.67px/32px 'Liberation Mono',monospace;color:#111;-webkit-text-stroke:0.25px #111">axis = cad.line2d(ax_bot, ax_top,</div><div class="t" style="left:2234.6px;top:1656.9px;font:26.67px/32px 'Liberation Mono',monospace;color:#111;-webkit-text-stroke:0.25px #111">construction=True)</div><div class="t" style="left:2110px;width:100.5px;text-align:right;top:1687.8px;font:23px/32px 'Liberation Sans',sans-serif;color:#868686;letter-spacing:0.3px">45</div><div class="t" style="left:2234.6px;top:1688.9px;font:26.67px/32px 'Liberation Mono',monospace;color:#111;-webkit-text-stroke:0.25px #111">cad.vertical(axis)</div><div class="t" style="left:2110px;width:100.5px;text-align:right;top:1719.8px;font:23px/32px 'Liberation Sans',sans-serif;color:#868686;letter-spacing:0.3px">46</div><div class="t" style="left:2234.6px;top:1720.9px;font:26.67px/32px 'Liberation Mono',monospace;color:#111;-webkit-text-stroke:0.25px #111">cad.length(axis, 30)</div><div class="t" style="left:2110px;width:100.5px;text-align:right;top:1751.8px;font:23px/32px 'Liberation Sans',sans-serif;color:#868686;letter-spacing:0.3px">47</div><div class="t" style="left:2110px;width:100.5px;text-align:right;top:1783.8px;font:23px/32px 'Liberation Sans',sans-serif;color:#868686;letter-spacing:0.3px">48</div><div class="t" style="left:2234.6px;top:1784.9px;font:26.67px/32px 'Liberation Mono',monospace;color:#111;-webkit-text-stroke:0.25px #111"># Semicircle profile: arc + closing line</div><div class="t" style="left:2110px;width:100.5px;text-align:right;top:1815.8px;font:23px/32px 'Liberation Sans',sans-serif;color:#868686;letter-spacing:0.3px">49</div><div class="t" style="left:2234.6px;top:1816.9px;font:26.67px/32px 'Liberation Mono',monospace;color:#111;-webkit-text-stroke:0.25px #111">arc_top = cad.point2d(40, 12)</div><div class="t" style="left:2110px;width:100.5px;text-align:right;top:1847.8px;font:23px/32px 'Liberation Sans',sans-serif;color:#868686;letter-spacing:0.3px">50</div><div class="t" style="left:2234.6px;top:1848.9px;font:26.67px/32px 'Liberation Mono',monospace;color:#111;-webkit-text-stroke:0.25px #111">arc_bot = cad.point2d(40, −12)</div></div></div><div class="r" style="left:3024px;top:212px;width:22px;height:1643px;border-radius:11px;background:#f2f2f2"></div><div class="r" style="left:3024px;top:212px;width:22px;height:1279px;border-radius:11px;background:#7b7b7b"></div><div class="r" style="left:2152px;top:1862px;width:900px;height:2px;background:#e4e4e4"></div><div class="t" style="left:2168px;top:1882.80px;font-size:21.5px;line-height:21.5px;color:#7b7b7b;font-weight:normal;letter-spacing:0px;font-family:'Liberation Sans',sans-serif;">50 commands</div><div class="r" style="left:2874px;top:1873px;width:75px;height:41px;border-radius:10px;background:#f4f4f4"></div><div class="r" style="left:2901px;top:1883px;width:21px;height:20.7px;border-radius:2.5px;background:#b3b3b3"></div><div class="r" style="left:2965px;top:1872px;width:71px;height:42px;border-radius:10px;background:#ebebeb"></div><svg width="3164" height="2070" viewBox="0 0 3164 2070"><path d="M2993,1883.5 L3010.5,1893.4 L2993,1903.3 Z" fill="#222" stroke="#222" stroke-width="2" stroke-linejoin="round"/></svg></div></div></body></html>
